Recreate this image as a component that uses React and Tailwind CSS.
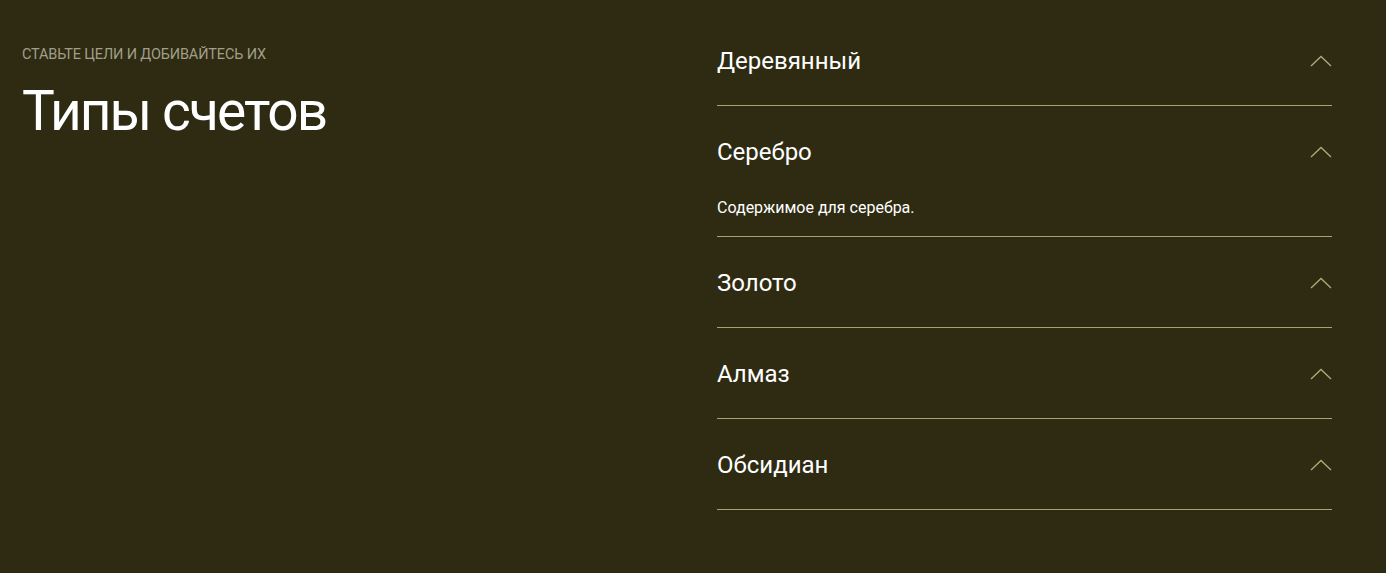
import { useState } from "react";

const items = [
  { id: "wood", title: "Деревянный", content: "Содержимое для дерева." },
  { id: "silver", title: "Серебро", content: "Содержимое для серебра." },
  { id: "gold", title: "Золото", content: "Содержимое для золота." },
  { id: "diamond", title: "Алмаз", content: "Содержимое для алмаза." },
  { id: "obsidian", title: "Обсидиан", content: "Содержимое для обсидиана." },
];

function Chevron() {
  return (
    <svg width="22" height="12" viewBox="0 0 22 12" fill="none">
      <path d="M1 11 L11 1.5 L21 11" stroke="#b2aa7a" strokeWidth="1.3" />
    </svg>
  );
}

export default function App() {
  const [open, setOpen] = useState("silver");

  return (
    <div
      className="min-h-screen bg-[#2e2b12] text-white"
      style={{ fontFamily: 'Roboto, "Liberation Sans", sans-serif' }}
    >
      <div className="flex pt-[15px] pl-[22px] pr-[54px]">
        {/* LEFT */}
        <div className="flex-1 pt-[32px]">
          <p className="text-[14.5px] leading-[15px] uppercase tracking-[-0.01em] text-[#a09f89]">
            Ставьте цели и добивайтесь их
          </p>
          <h1 className="mt-[22px] text-[55px] leading-none tracking-[-0.035em] text-white">
            Типы счетов
          </h1>
        </div>

        {/* ACCORDION */}
        <div className="w-[615px]">
          {items.map((it) => {
            const isOpen = open === it.id;
            return (
              <div key={it.id} className="border-b border-[#a9a16f]">
                <button
                  onClick={() => setOpen(isOpen ? null : it.id)}
                  className="w-full flex justify-between items-center pt-8 pb-[30px] text-left"
                >
                  <span className="text-[24px] leading-7">{it.title}</span>
                  <Chevron />
                </button>
                {isOpen && (
                  <p className="pt-[2px] pb-[18px] text-[16px] leading-5">
                    {it.content}
                  </p>
                )}
              </div>
            );
          })}
        </div>
      </div>
    </div>
  );
}
